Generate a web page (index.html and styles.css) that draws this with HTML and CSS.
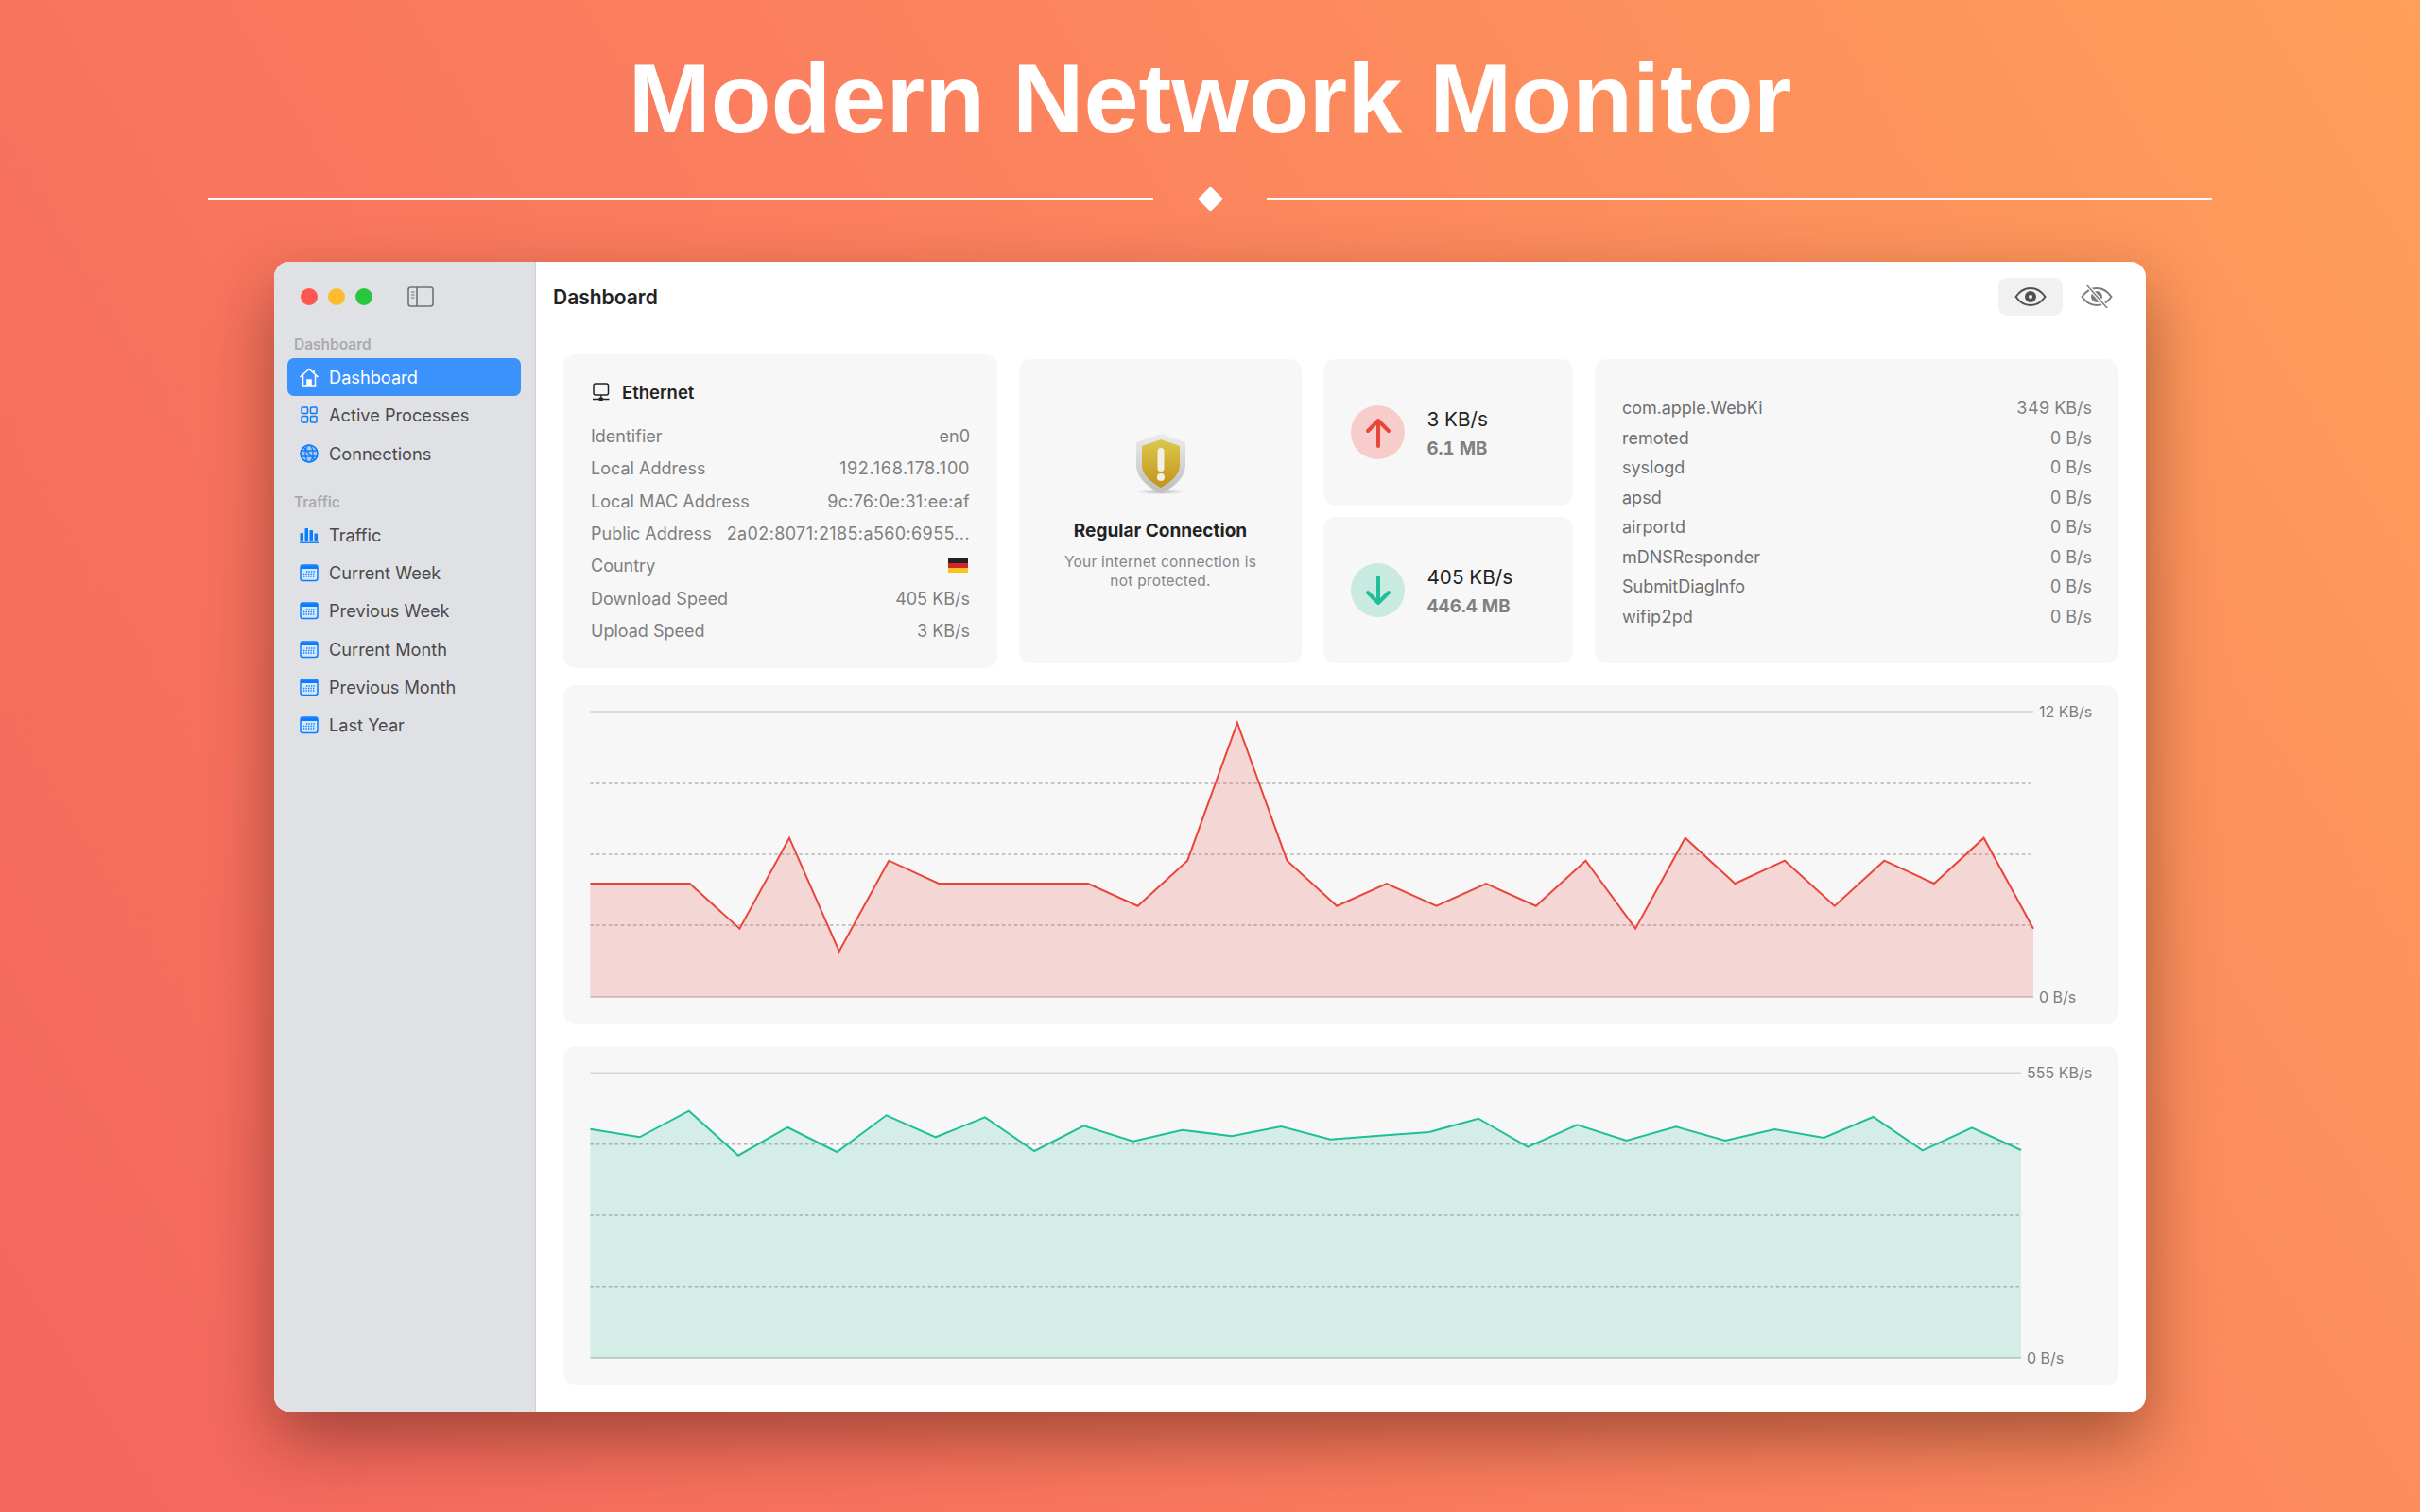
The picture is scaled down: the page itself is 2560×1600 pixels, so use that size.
FILE: index.html
```html
<!DOCTYPE html>
<html lang="en">
<head>
<meta charset="utf-8">
<title>Modern Network Monitor</title>
<link rel="stylesheet" href="styles.css">
</head>
<body>
<header class="hero">
  <h1 class="hero-title">Modern Network Monitor</h1>
  <div class="divider"><span class="rule"></span><span class="diamond"></span><span class="rule"></span></div>
</header>
<div class="window">
  <aside class="sidebar">
    <div class="titlebar">
      <span class="light red"></span><span class="light yellow"></span><span class="light green"></span>
      <svg class="side-toggle" viewBox="0 0 28 22" width="28" height="22"><rect x="1" y="1" width="26" height="20" rx="2.500" fill="none" stroke="#707173" stroke-width="1.600"/><path d="M10 1v20" stroke="#707173" stroke-width="1.600"/><path d="M4 6h3.500M4 9h3.500M4 12h3.500" stroke="#707173" stroke-width="1.200"/></svg>
    </div>
    <div class="section first">Dashboard</div>
    <div class="item active"><svg class="ico" viewBox="0 0 22 22"><path d="M1.500 11 11 2.500 20.500 11M4.500 9v11h13V9M9 20v-6h4v6M16 4v3" fill="none" stroke="#fff" stroke-width="1.600"/><path d="M9 20v-6h4v6z" fill="#fff"/></svg>Dashboard</div>
    <div class="item"><svg class="ico" viewBox="0 0 22 22"><g fill="none" stroke="#0a7cff" stroke-width="1.500"><rect x="3" y="3" width="6.500" height="6.500" rx="1"/><rect x="12.500" y="3" width="6.500" height="6.500" rx="1"/><rect x="3" y="12.500" width="6.500" height="6.500" rx="1"/><rect x="12.500" y="12.500" width="6.500" height="6.500" rx="1"/></g></svg>Active Processes</div>
    <div class="item"><svg class="ico" viewBox="0 0 22 22"><g fill="none" stroke="#0a7cff" stroke-width="1.300"><circle cx="11" cy="11" r="9" fill="#0a7cff" fill-opacity=".25" stroke-width="1.600"/><ellipse cx="11" cy="11" rx="4" ry="9"/><path d="M2.500 8h17M2.500 14h17M5 4l12 14"/></g></svg>Connections</div>
    <div class="section">Traffic</div>
    <div class="item"><svg class="ico" viewBox="0 0 22 22"><g fill="#0a7cff"><rect x="1.500" y="9" width="3.500" height="8" rx=".8"/><rect x="6.500" y="4" width="3.500" height="13" rx=".8"/><rect x="11.500" y="6" width="3.500" height="11" rx=".8"/><rect x="16.500" y="9.500" width="3.500" height="7.500" rx=".8"/><rect x="1" y="18.500" width="20" height="1.400"/></g></svg>Traffic</div>
    <div class="item"><svg class="ico"><use href="#cal"/></svg>Current Week</div>
    <div class="item"><svg class="ico"><use href="#cal"/></svg>Previous Week</div>
    <div class="item"><svg class="ico"><use href="#cal"/></svg>Current Month</div>
    <div class="item"><svg class="ico"><use href="#cal"/></svg>Previous Month</div>
    <div class="item"><svg class="ico"><use href="#cal"/></svg>Last Year</div>
  </aside>
  <main class="main">
    <div class="toolbar">
      <div class="page-title">Dashboard</div>
      <div class="eye-btn on"><svg width="34" height="24" viewBox="0 0 34 24"><path d="M1.500 12C6 5.500 11 3 17 3s11 2.500 15.500 9C28 18.500 23 21 17 21S6 18.500 1.500 12z" fill="none" stroke="#505050" stroke-width="2"/><circle cx="17" cy="12" r="6" fill="#505050"/><circle cx="17" cy="12" r="2" fill="#f1f1f1"/></svg></div>
      <div class="eye-btn"><svg width="34" height="24" viewBox="0 0 34 24"><path d="M1.500 12C6 5.500 11 3 17 3s11 2.500 15.500 9C28 18.500 23 21 17 21S6 18.500 1.500 12z" fill="none" stroke="#7c7c7c" stroke-width="2"/><circle cx="17" cy="12" r="6" fill="#7c7c7c"/><path d="M6 -1 29 25" stroke="#fff" stroke-width="4"/><path d="M6 -1 29 25" stroke="#7c7c7c" stroke-width="1.500"/></svg></div>
    </div>
    <div class="top-row">
      <section class="card info">
        <div class="info-head"><svg width="18" height="20" viewBox="0 0 18 20"><rect x="1" y="1" width="15.500" height="12" rx="2" fill="none" stroke="#222" stroke-width="1.500"/><path d="M8.800 13v4M0 17.500h17.500" stroke="#222" stroke-width="1.300"/><rect x="6.500" y="15.500" width="4.500" height="3.500" rx="1" fill="#222"/></svg><span>Ethernet</span></div>
        <div class="row"><span>Identifier</span><span>en0</span></div>
        <div class="row"><span>Local Address</span><span class="ip">192.168.178.100</span></div>
        <div class="row"><span>Local MAC Address</span><span class="hex">9c:76:0e:31:ee:af</span></div>
        <div class="row"><span>Public Address</span><span class="hex wide">2a02:8071:2185:a560:6955...</span></div>
        <div class="row"><span>Country</span><svg class="flag" width="21" height="15" viewBox="0 0 21 15"><rect width="21" height="5" fill="#222"/><rect y="5" width="21" height="5" fill="#d8232a"/><rect y="10" width="21" height="5" fill="#f7c51e"/></svg></div>
        <div class="row"><span>Download Speed</span><span>405 KB/s</span></div>
        <div class="row"><span>Upload Speed</span><span>3 KB/s</span></div>
      </section>
      <section class="card status">
        <svg class="shield" width="54" height="66" viewBox="0 0 54 66">
          <defs>
            <linearGradient id="sil" x1="0" y1="0" x2="0" y2="1"><stop offset="0" stop-color="#ececec"/><stop offset="1" stop-color="#bdbdbd"/></linearGradient>
            <linearGradient id="gold" x1="0" y1="0" x2="0" y2="1"><stop offset="0" stop-color="#dcc84e"/><stop offset="1" stop-color="#c29418"/></linearGradient>
            <radialGradient id="sh"><stop offset="0" stop-color="#000" stop-opacity=".25"/><stop offset="1" stop-color="#000" stop-opacity="0"/></radialGradient>
          </defs>
          <ellipse cx="27" cy="62.500" rx="25" ry="3" fill="url(#sh)"/>
          <path d="M27 1 53 10V34C53 48 40 58 27 64 14 58 1 48 1 34V10z" fill="url(#sil)"/>
          <path d="M27 7 47 14V34C47 45 37 52 27 58 17 52 7 45 7 34V14z" fill="url(#gold)"/>
          <rect x="23.500" y="16" width="7" height="25" rx="3.500" fill="#f1efe6"/>
          <circle cx="27" cy="47" r="4" fill="#f1efe6"/>
        </svg>
        <div class="status-title">Regular Connection</div>
        <div class="status-sub">Your internet connection is<br>not protected.</div>
      </section>
      <div class="speeds">
        <section class="card speed">
          <span class="disc up"><svg width="28" height="32" viewBox="0 0 28 32"><path d="M14 30V3M3 14 14 3l11 11" fill="none" stroke="#e8463a" stroke-width="4" stroke-linecap="round" stroke-linejoin="round"/></svg></span>
          <div class="speed-text"><div class="rate">3 KB/s</div><div class="total">6.1 MB</div></div>
        </section>
        <section class="card speed">
          <span class="disc down"><svg width="28" height="32" viewBox="0 0 28 32"><path d="M14 2v27M3 18l11 11 11-11" fill="none" stroke="#1fbf98" stroke-width="4" stroke-linecap="round" stroke-linejoin="round"/></svg></span>
          <div class="speed-text"><div class="rate">405 KB/s</div><div class="total">446.4 MB</div></div>
        </section>
      </div>
      <section class="card procs">
        <div class="proc"><span>com.apple.WebKi</span><span>349 KB/s</span></div>
        <div class="proc"><span>remoted</span><span>0 B/s</span></div>
        <div class="proc"><span>syslogd</span><span>0 B/s</span></div>
        <div class="proc"><span>apsd</span><span>0 B/s</span></div>
        <div class="proc"><span>airportd</span><span>0 B/s</span></div>
        <div class="proc"><span>mDNSResponder</span><span>0 B/s</span></div>
        <div class="proc"><span>SubmitDiagInfo</span><span>0 B/s</span></div>
        <div class="proc"><span>wifip2pd</span><span>0 B/s</span></div>
      </section>
    </div>
    <section class="card chart">
      <svg class="plot" viewBox="0 0 1645 359" width="1645" height="359">
        <path class="grid-solid" d="M28.400 28H1555"/>
        <path class="grid-dash" d="M28.400 104H1556M28.400 179H1556M28.400 254H1556"/>
        <path class="grid-base" d="M28.400 330H1555"/>
        <polygon class="area-red" points="28.400,210 81,210 133.700,210 186.400,257.700 239,161.700 291.700,281.700 344.300,185.700 397,210 449.600,210 502.300,210 555,210 607.600,233.700 660.200,185.700 712.900,40 765.500,185.700 818.200,233.700 870.800,210 923.500,233.700 976.100,210 1028.800,233.700 1081.400,185.700 1134.100,257.700 1186.700,161.700 1239.400,210 1292,185.700 1344.700,233.700 1397.300,185.700 1450,210 1502.600,161.700 1555,257.700 1555,330 28.400,330"/>
        <polyline class="line-red" points="28.400,210 81,210 133.700,210 186.400,257.700 239,161.700 291.700,281.700 344.300,185.700 397,210 449.600,210 502.300,210 555,210 607.600,233.700 660.200,185.700 712.900,40 765.500,185.700 818.200,233.700 870.800,210 923.500,233.700 976.100,210 1028.800,233.700 1081.400,185.700 1134.100,257.700 1186.700,161.700 1239.400,210 1292,185.700 1344.700,233.700 1397.300,185.700 1450,210 1502.600,161.700 1555,257.700"/>
        <text class="axis" x="1561" y="34">12 KB/s</text>
        <text class="axis" x="1561" y="336">0 B/s</text>
      </svg>
    </section>
    <section class="card chart second">
      <svg class="plot" viewBox="0 0 1645 359" width="1645" height="359">
        <path class="grid-solid" d="M28.400 28.300H1542"/>
        <path class="grid-dash" d="M28.400 103.700H1542M28.400 179H1542M28.400 254.700H1542"/>
        <path class="grid-base" d="M28.400 330H1542"/>
        <polygon class="area-green" points="28.400,87.700 80.600,96.300 132.800,68.700 185,115.700 237.200,86 289.400,112 341.600,73.300 393.800,96.300 446,75.300 498.200,111 550.400,84.300 602.600,100.700 654.800,88.700 707,95.300 759.200,85 811.400,98.700 863.600,94.700 915.800,91 968,76.700 1020.200,106.700 1072.400,83.300 1124.600,100 1176.800,85.300 1229,100 1281.200,88 1333.400,97 1385.600,75 1437.800,110.300 1490,86.300 1542,110 1542,330 28.400,330"/>
        <polyline class="line-green" points="28.400,87.700 80.600,96.300 132.800,68.700 185,115.700 237.200,86 289.400,112 341.600,73.300 393.800,96.300 446,75.300 498.200,111 550.400,84.300 602.600,100.700 654.800,88.700 707,95.300 759.200,85 811.400,98.700 863.600,94.700 915.800,91 968,76.700 1020.200,106.700 1072.400,83.300 1124.600,100 1176.800,85.300 1229,100 1281.200,88 1333.400,97 1385.600,75 1437.800,110.300 1490,86.300 1542,110"/>
        <text class="axis" x="1548" y="34">555 KB/s</text>
        <text class="axis" x="1548" y="336">0 B/s</text>
      </svg>
    </section>
  </main>
</div>
<svg class="defs" width="0" height="0"><defs><symbol id="cal" viewBox="0 0 22 22"><rect x="2" y="3" width="18" height="16.500" rx="2.500" fill="#d5e7fd" stroke="#0a7cff" stroke-width="1.500"/><path d="M2 3.500h18v3.500H2z" fill="#0a7cff"/><path d="M8 10h9.500M5 12.500h12.500M5 15h12.500" stroke="#0a7cff" stroke-width="1.300" stroke-dasharray="1.300 1.200"/></symbol></defs></svg>
</body>
</html>
```
FILE: styles.css
```css
* { box-sizing: border-box; }
html, body { margin: 0; padding: 0; }
body {
  width: 2560px;
  height: 1600px;
  overflow: hidden;
  background: linear-gradient(58deg, #f4655e 0%, #fb7f5e 50%, #ff9f5b 100%);
  font-family: Inter, "Liberation Sans", sans-serif;
  color: #222;
}
.hero { height: 277px; padding: 0 220px; }
.hero-title {
  margin: 0;
  padding-top: 43px;
  height: 200px;
  text-align: center;
  font: 700 104.500px/122px "Liberation Sans", sans-serif;
  color: #fff;
}
.divider { display: flex; align-items: center; justify-content: space-between; height: 20px; }
.rule { display: block; width: 1000px; height: 3px; background: #fff; opacity: .95; }
.diamond { display: block; width: 19px; height: 19px; background: #fff; transform: rotate(45deg); border-radius: 2px; }
.window {
  display: flex;
  width: 1980px;
  height: 1217px;
  margin: 0 auto;
  background: #fff;
  border-radius: 16px;
  overflow: hidden;
  box-shadow: 0 30px 70px rgba(60, 20, 10, .45);
}
.sidebar {
  flex: 0 0 277px;
  padding: 0 15px 0 14px;
  background: #e0e1e4;
  border-right: 1px solid #cfd0d3;
}
.titlebar { display: flex; align-items: center; gap: 11px; height: 74px; padding-left: 14px; }
.light { display: block; width: 18px; height: 18px; border-radius: 50%; }
.red { background: #fc5753; }
.yellow { background: #fdbc2d; }
.green { background: #29c73f; }
.side-toggle { margin-left: 26px; }
.section { height: 28px; margin-top: 18px; padding-left: 7px; font-size: 15.500px; font-weight: 600; line-height: 28px; color: #a9abae; }
.section.first { margin-top: 0; }
.item {
  display: flex;
  align-items: center;
  gap: 10px;
  height: 40.250px;
  padding-left: 12px;
  border-radius: 7px;
  font-size: 18.200px;
  color: #4a4a4c;
}
.item.active { background: #3b92fd; color: #fff; }
.ico { display: block; flex: none; width: 22px; height: 22px; }
.main { flex: 1; padding: 17px 29px 28px 29px; min-width: 0; }
.toolbar { display: flex; align-items: center; height: 40px; gap: 2px; margin: 0 -11px; }
.page-title { flex: 1; font-size: 21px; font-weight: 600; color: #222; }
.eye-btn { display: flex; align-items: center; justify-content: center; width: 68px; height: 40px; border-radius: 9px; }
.eye-btn.on { background: #f1f1f1; }
.top-row { display: flex; align-items: center; gap: 23px; height: 332px; margin-top: 41px; }
.card { background: #f7f7f7; border-radius: 13px; }
.info { flex: 0 0 459px; height: 332px; padding: 27px 29px 0 29px; font-size: 18px; color: #7f7f7f; }
.info-head { display: flex; align-items: center; gap: 13px; height: 26px; margin-bottom: 16px; font-size: 18.500px; font-weight: 600; color: #222; }
.info-head svg { margin-left: 2px; }
.row { display: flex; align-items: center; justify-content: space-between; height: 34.450px; white-space: nowrap; }
.ip { letter-spacing: .7px; }
.hex { letter-spacing: .25px; }
.hex.wide { letter-spacing: .38px; }
.flag { margin-right: 2px; }
.status { flex: 0 0 299px; height: 322px; padding-top: 78px; text-align: center; }
.shield { display: block; margin: 0 auto; }
.status-title { margin-top: 27px; font-size: 19px; font-weight: 700; line-height: 22px; color: #222; }
.status-sub { margin-top: 12px; font-size: 15.500px; letter-spacing: .25px; line-height: 20px; color: #868686; }
.speeds { flex: 0 0 264px; display: flex; flex-direction: column; gap: 12px; height: 322px; }
.speed { display: flex; align-items: center; gap: 23.500px; height: 155px; padding-left: 29px; }
.disc { display: flex; align-items: center; justify-content: center; flex: none; width: 57px; height: 57px; border-radius: 50%; }
.disc.up { background: #f6cdca; }
.disc.down { background: #c9eae1; }
.speed-text { padding-top: 3px; }
.rate { font-size: 20.700px; line-height: 30px; color: #222; }
.total { margin-top: 2px; font-size: 18.700px; line-height: 28px; font-weight: 700; color: #808080; font-variant-numeric: tabular-nums; }
.procs { flex: 1; height: 322px; padding: 36px 28px 0 29px; font-size: 18px; color: #7f7f7f; font-variant-numeric: tabular-nums; }
.proc { display: flex; justify-content: space-between; align-items: center; height: 31.500px; }
.proc span:first-child { color: #707070; }
.chart { height: 359px; margin-top: 18px; }
.chart.second { margin-top: 23px; }
.plot { display: block; }
.grid-solid { fill: none; stroke: #d5d5d5; stroke-width: 1.500; }
.grid-base { fill: none; stroke: #d0d0d0; stroke-width: 2; }
.grid-dash { fill: none; stroke: #b5b5b5; stroke-width: 1.500; stroke-dasharray: 3.500 3; }
.area-red { fill: #e8463a; fill-opacity: .18; }
.line-red { fill: none; stroke: #e8463a; stroke-width: 2; stroke-linejoin: miter; }
.area-green { fill: #1fbf98; fill-opacity: .16; }
.line-green { fill: none; stroke: #1fbf98; stroke-width: 2; }
.axis { font-family: Inter, "Liberation Sans", sans-serif; font-size: 16px; fill: #7c7c7c; }
.defs { position: absolute; }
```
